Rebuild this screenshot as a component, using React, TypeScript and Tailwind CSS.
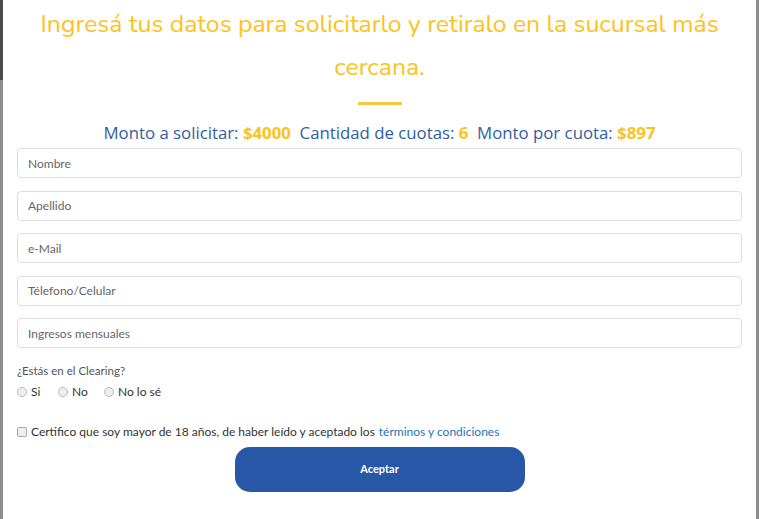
export default function App() {
  const campos = ['Nombre', 'Apellido', 'e-Mail', 'Télefono/Celular', 'Ingresos mensuales'];
  const opciones = [
    { txt: 'Si', w: 'w-[41px]' },
    { txt: 'No', w: 'w-[46px]' },
    { txt: 'No lo sé', w: 'w-auto' },
  ];

  return (
    <div className="flex h-[519px] w-[759px] bg-[#8c8c8c]">
      {/* fondo de la página detrás del modal */}
      <div className="flex w-[3px] flex-col">
        <div className="h-[80px] bg-[#4a4a4a]"></div>
        <div className="flex-1 bg-[#8c8c8c]"></div>
      </div>

      <div className="flex flex-1 flex-col bg-white px-[14px] font-['Lato',sans-serif]">
        {/* Título */}
        <h1 className="mx-auto mt-[3px] w-[720px] text-center font-['Nunito','Lato',sans-serif] text-[24.8px] leading-[43px] text-[#fcc21e]">
          Ingresá tus datos para solicitarlo y retiralo en la sucursal más cercana.
        </h1>
        <div className="mx-auto mt-[13px] h-[3px] w-[44px] bg-[#f7c73d]"></div>

        {/* Resumen del préstamo */}
        <p className="mt-[18px] text-center font-['Open_Sans',sans-serif] text-[16.8px] leading-[20px] text-[#2f5da3]">
          Monto a solicitar: <span className="font-bold text-[#fcc21e]">$4000</span>&nbsp; Cantidad de cuotas:{' '}
          <span className="font-bold text-[#fcc21e]">6</span>&nbsp; Monto por cuota:{' '}
          <span className="font-bold text-[#fcc21e]">$897</span>
        </p>

        {/* Campos */}
        <div className="mt-[5px] flex flex-col gap-[12.5px]">
          {campos.map((c) => (
            <input
              key={c}
              placeholder={c}
              className="h-[30px] w-full rounded-[4px] border border-[#dedede] px-[10px] text-[12px] text-[#333] outline-none placeholder:text-[#666]"
            />
          ))}
        </div>

        {/* Clearing */}
        <p className="mt-[15px] text-[11.5px] leading-[16px] text-[#555]">¿Estás en el Clearing?</p>
        <div className="mt-[4px] flex items-center text-[12px] text-[#333]">
          {opciones.map((o) => (
            <label key={o.txt} className={`flex items-center gap-[4px] ${o.w}`}>
              <span className="h-[10px] w-[10px] rounded-full border border-[#bbb] bg-[#eee]"></span>
              {o.txt}
            </label>
          ))}
        </div>

        {/* Términos */}
        <label className="mt-[22px] flex items-center gap-[4px] text-[12px] text-[#333]">
          <span className="h-[10px] w-[10px] rounded-[2px] border border-[#aaa] bg-[#eee]"></span>
          Certifico que soy mayor de 18 años, de haber leído y aceptado los{' '}
          <a className="text-[#1a73b8]">términos y condiciones</a>
        </label>

        <button className="mx-auto mt-[6px] h-[45px] w-[290px] rounded-[15px] bg-[#2757a6] text-[11px] font-bold text-white">
          Aceptar
        </button>
      </div>

      <div className="w-[3px] bg-[#8c8c8c]"></div>
    </div>
  );
}
